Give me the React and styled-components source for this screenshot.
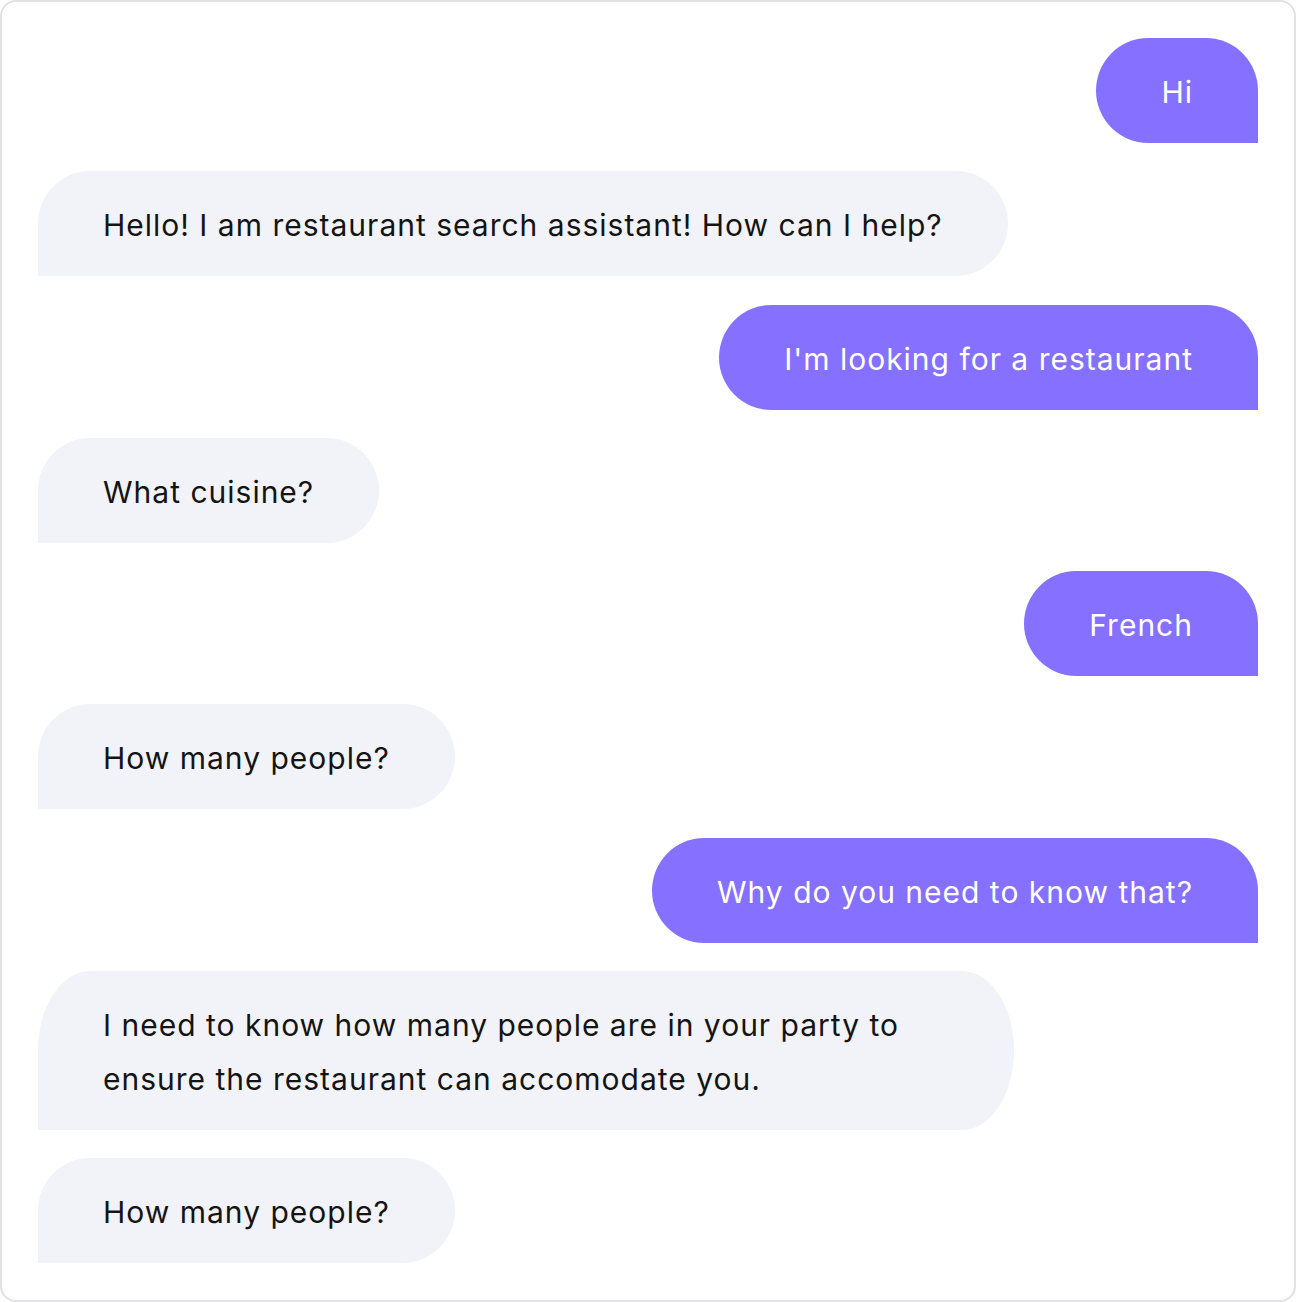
import React from 'react';
import styled, { createGlobalStyle } from 'styled-components';

const GlobalStyle = createGlobalStyle`
	html, body {
		margin: 0;
		padding: 0;
		background: #fff;
	}
	body {
		font-family: Inter, 'Liberation Sans', sans-serif;
		-webkit-font-smoothing: antialiased;
	}
`;

const Frame = styled.div`
	box-sizing: border-box;
	width: 1296px;
	height: 1302px;
	border: 2px solid #e2e2e4;
	border-radius: 16px;
	padding: 36px;
	display: flex;
	flex-direction: column;
	gap: 28.3px;
	background: #fff;
`;

const Row = styled.div`
	display: flex;
	justify-content: ${(props) => (props.mine ? 'flex-end' : 'flex-start')};
`;

const Bubble = styled.div`
	box-sizing: border-box;
	max-width: 80%;
	padding: 27px 65px 24px;
	font-size: 30px;
	line-height: 54px;
	letter-spacing: 1px;
	font-weight: 400;
	color: ${(props) => (props.mine ? '#ffffff' : '#141414')};
	background: ${(props) => (props.mine ? '#8570ff' : '#f2f3f8')};
	border-radius: ${(props) =>
		props.mine ? '52px 52px 0 52px / 50% 50% 0 50%' : '52px 52px 52px 0 / 50% 50% 50% 0'};
`;

const messages = [
	{ mine: true, text: 'Hi' },
	{ mine: false, text: 'Hello! I am restaurant search assistant! How can I help?' },
	{ mine: true, text: "I'm looking for a restaurant" },
	{ mine: false, text: 'What cuisine?' },
	{ mine: true, text: 'French' },
	{ mine: false, text: 'How many people?' },
	{ mine: true, text: 'Why do you need to know that?' },
	{
		mine: false,
		text: 'I need to know how many people are in your party to ensure the restaurant can accomodate you.',
	},
	{ mine: false, text: 'How many people?' },
];

export default function App() {
	return (
		<>
			<GlobalStyle />
			<Frame>
				{messages.map((m, i) => (
					<Row key={i} mine={m.mine}>
						<Bubble mine={m.mine}>{m.text}</Bubble>
					</Row>
				))}
			</Frame>
		</>
	);
}
